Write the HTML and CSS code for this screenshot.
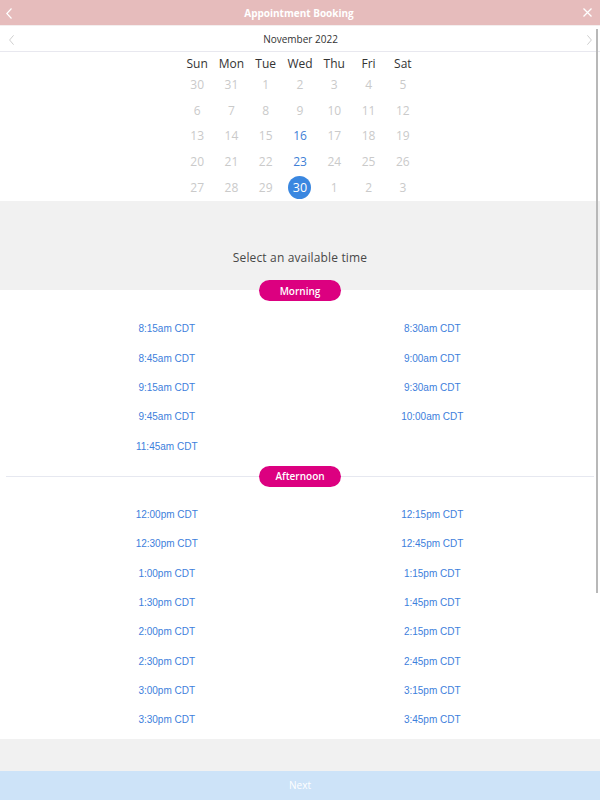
FILE: index.html
```html
<!DOCTYPE html>
<html lang="en">
<head>
<meta charset="utf-8">
<title>Appointment Booking</title>
<link rel="stylesheet" href="styles.css">
</head>
<body>
<div class="app">
  <header class="titlebar">
    <span class="tb-left"><svg width="6" height="11" viewBox="0 0 6 11"><polyline points="5.5,0.5 0.8,5.5 5.5,10.5" fill="none" stroke="#fff" stroke-width="1.2"/></svg></span>
    <h1 class="title">Appointment Booking</h1>
    <span class="tb-right"><svg width="9" height="9" viewBox="0 0 9 9"><path d="M0.5 0.5 L8.5 8.5 M8.5 0.5 L0.5 8.5" stroke="#fff" stroke-width="1.3"/></svg></span>
  </header>

  <div class="monthbar">
    <span class="mb-left"><svg width="5" height="10" viewBox="0 0 5 10"><polyline points="4.6,0.3 0.6,5 4.6,9.7" fill="none" stroke="#cfcfcf" stroke-width="1"/></svg></span>
    <span class="month">November 2022</span>
    <span class="mb-right"><svg width="5" height="10" viewBox="0 0 5 10"><polyline points="0.4,0.3 4.4,5 0.4,9.7" fill="none" stroke="#cfcfcf" stroke-width="1"/></svg></span>
  </div>

  <div class="calendar">
    <div class="cal-grid cal-head">
      <span>Sun</span><span>Mon</span><span>Tue</span><span>Wed</span><span>Thu</span><span>Fri</span><span>Sat</span>
    </div>
    <div class="cal-grid cal-days">
      <span>30</span><span>31</span><span>1</span><span>2</span><span>3</span><span>4</span><span>5</span>
      <span>6</span><span>7</span><span>8</span><span>9</span><span>10</span><span>11</span><span>12</span>
      <span>13</span><span>14</span><span>15</span><span class="avail">16</span><span>17</span><span>18</span><span>19</span>
      <span>20</span><span>21</span><span>22</span><span class="avail">23</span><span>24</span><span>25</span><span>26</span>
      <span>27</span><span>28</span><span>29</span><span class="selected"><b>30</b></span><span>1</span><span>2</span><span>3</span>
    </div>
  </div>

  <div class="prompt">Select an available time</div>

  <div class="slots">
    <div class="divider divider-first"><span class="pill">Morning</span></div>
    <div class="slot-grid slot-grid-morning">
      <a>8:15am CDT</a><a>8:30am CDT</a>
      <a>8:45am CDT</a><a>9:00am CDT</a>
      <a>9:15am CDT</a><a>9:30am CDT</a>
      <a>9:45am CDT</a><a>10:00am CDT</a>
      <a>11:45am CDT</a>
    </div>
    <div class="divider divider-line"><span class="pill">Afternoon</span></div>
    <div class="slot-grid slot-grid-afternoon">
      <a>12:00pm CDT</a><a>12:15pm CDT</a>
      <a>12:30pm CDT</a><a>12:45pm CDT</a>
      <a>1:00pm CDT</a><a>1:15pm CDT</a>
      <a>1:30pm CDT</a><a>1:45pm CDT</a>
      <a>2:00pm CDT</a><a>2:15pm CDT</a>
      <a>2:30pm CDT</a><a>2:45pm CDT</a>
      <a>3:00pm CDT</a><a>3:15pm CDT</a>
      <a>3:30pm CDT</a><a>3:45pm CDT</a>
    </div>
  </div>

  <div class="spacer"></div>
  <div class="nextbar">Next</div>
</div>
<div class="scrollbar"></div>
</body>
</html>
```

FILE: styles.css
```css
html, body {
  margin: 0;
  padding: 0;
}
body {
  width: 600px;
  height: 800px;
  overflow: hidden;
  position: relative;
  background: #ffffff;
  font-family: "Open Sans", "DejaVu Sans", sans-serif;
}
.app {
  display: flex;
  flex-direction: column;
  height: 800px;
}

/* Title bar */
.titlebar {
  height: 26px;
  background: #e6bcbc;
  display: grid;
  grid-template-columns: 1fr auto 1fr;
  align-items: center;
  padding: 0 8px 0 6px;
  box-sizing: border-box;
}
.tb-left, .tb-right, .mb-left, .mb-right {
  display: flex;
  align-items: center;
}
.tb-left { padding-top: 1px; }
.tb-right { justify-content: flex-end; padding-bottom: 1px; }
.title {
  margin: 0;
  color: #ffffff;
  font-size: 10px;
  font-weight: 700;
  line-height: 26px;
}

/* Month bar */
.monthbar {
  height: 25px;
  border-bottom: 1px solid #e8e8ef;
  display: grid;
  grid-template-columns: 1fr auto 1fr;
  align-items: center;
  padding: 0 8px 0 9px;
  border-top: 1px solid #f4eeee;
  box-sizing: content-box;
  margin-top: -1px;
}
.mb-left { padding-top: 2px; }
.mb-right { justify-content: flex-end; padding-top: 2px; }
.month {
  font-size: 10px;
  color: #333333;
  line-height: 25px;
  padding-top: 1px;
}

/* Calendar */
.calendar {
  height: 149px;
  padding-top: 2.5px;
  box-sizing: border-box;
  display: flex;
  flex-direction: column;
  align-items: center;
}
.cal-grid {
  width: 240px;
  display: grid;
  grid-template-columns: repeat(7, 1fr);
  justify-items: center;
  align-items: center;
}
.cal-head {
  grid-auto-rows: 17px;
  font-size: 12px;
  color: #333333;
}
.cal-days {
  grid-auto-rows: 25.75px;
  font-size: 12px;
  color: #cacaca;
}
.cal-days .avail {
  color: #3f7fd6;
}
.cal-days .selected {
  width: 23px;
  height: 23px;
  border-radius: 50%;
  background: #3a87e0;
  color: #ffffff;
  display: flex;
  align-items: center;
  justify-content: center;
}
.cal-days .selected b {
  font-weight: 400;
  font-size: 12.5px;
}

/* Prompt band */
.prompt {
  height: 89px;
  background: #f1f1f1;
  box-sizing: border-box;
  padding-top: 49px;
  text-align: center;
  font-size: 12px;
  line-height: 16px;
  letter-spacing: 0.15px;
  color: #484848;
}

/* Slots */
.slots {
  height: 449px;
  padding: 0 6px;
  box-sizing: border-box;
  background: #ffffff;
}
.divider {
  height: 21px;
  display: flex;
  align-items: center;
  justify-content: center;
  position: relative;
}
.divider-first {
  margin-top: -10px;
}
.divider-line {
  margin-top: 5px;
}
.divider-line::before,
.divider-line::after {
  content: "";
  flex: 1;
  height: 1px;
  background: #e6e8f0;
}
.pill {
  width: 82px;
  height: 21px;
  border-radius: 11px;
  background: #dc0080;
  color: #ffffff;
  font-size: 10px;
  font-weight: 600;
  display: flex;
  align-items: center;
  justify-content: center;
}
.slot-grid {
  display: grid;
  grid-template-columns: 1fr 1fr;
  grid-auto-rows: 29.3px;
  padding: 0 29px 0 28px;
  align-items: center;
  justify-items: center;
}
.slot-grid-morning {
  margin-top: 13px;
  grid-auto-rows: 29.4px;
}
.slot-grid-afternoon {
  margin-top: 13px;
}
.slot-grid a {
  font-family: "Liberation Sans", Arial, sans-serif;
  font-size: 10px;
  color: #3d80dc;
  cursor: pointer;
}

/* Footer */
.spacer {
  flex: 1;
  background: #f1f1f1;
}
.nextbar {
  height: 29px;
  background: #cde3f8;
  color: #ffffff;
  font-size: 10px;
  text-align: center;
  line-height: 29px;
}

.scrollbar {
  position: absolute;
  left: 596px;
  top: 29px;
  width: 2px;
  height: 564px;
  background: #b8b8b8;
}
```
